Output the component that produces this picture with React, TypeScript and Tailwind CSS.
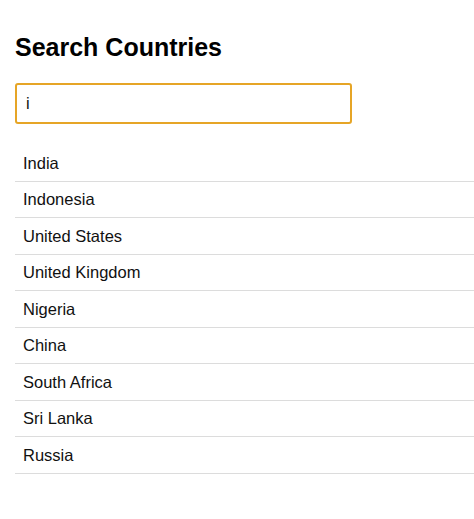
import { useState } from "react";

const COUNTRIES = [
  "India",
  "Indonesia",
  "United States",
  "United Kingdom",
  "Nigeria",
  "China",
  "South Africa",
  "Sri Lanka",
  "Russia",
];

export default function App() {
  const [query, setQuery] = useState("i");

  const results = COUNTRIES.filter((c) => c.toLowerCase().includes(query.toLowerCase()));

  return (
    <div className="min-h-screen bg-white pl-[15px] pt-[33px] font-['Liberation_Sans',Arial,sans-serif] text-[#111]">
      <h2 className="text-[25px] font-bold leading-[29px] text-black">Search Countries</h2>
      <input
        autoFocus
        value={query}
        onChange={(e) => setQuery(e.target.value)}
        className="mt-[21px] block h-[41px] w-[337px] rounded-[3px] border-2 border-[#e6a526] px-[9px] text-[16.5px] text-[#111] caret-black outline-none"
      />
      <ul className="mt-[21px]">
        {results.map((name) => (
          <li
            key={name}
            className="flex h-[36.5px] items-center border-b border-[#dcdcdc] pl-[8px] text-[16.5px] leading-none"
          >
            {name}
          </li>
        ))}
      </ul>
    </div>
  );
}
